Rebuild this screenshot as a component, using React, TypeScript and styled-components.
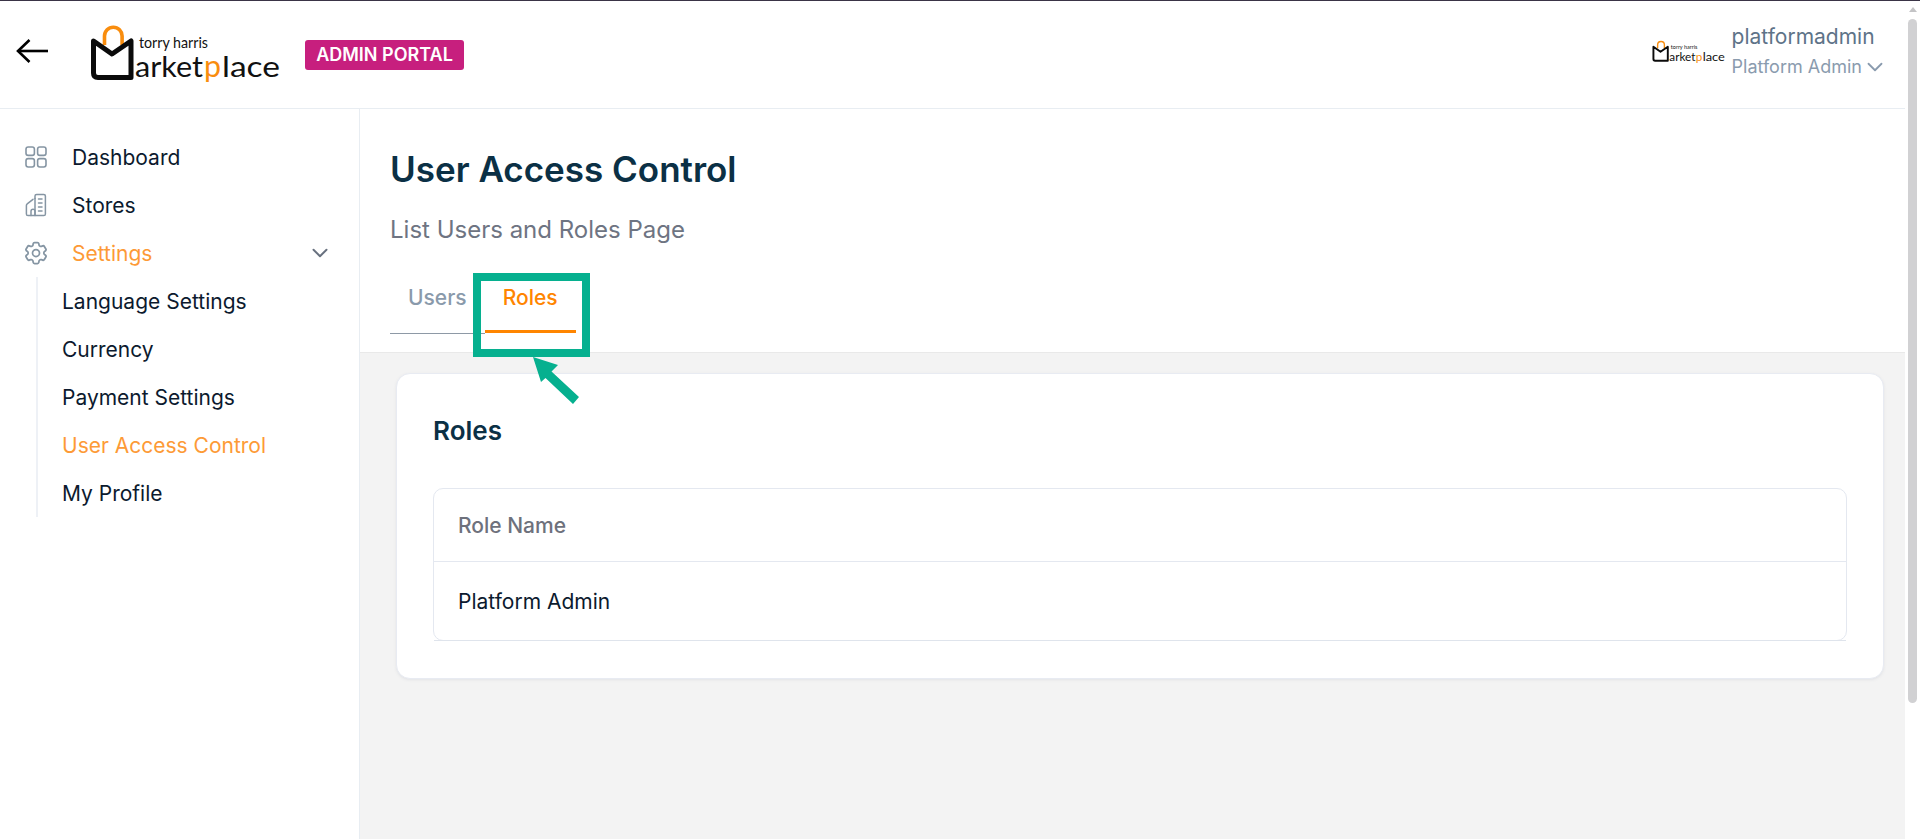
import React from 'react';
import styled, { createGlobalStyle } from 'styled-components';
import { HiOutlineCog6Tooth } from 'react-icons/hi2';
import { ChevronDown } from 'lucide-react';

const Global = createGlobalStyle`
  html, body { margin: 0; padding: 0; height: 100%; overflow: hidden; background: #fff; }
  * { box-sizing: border-box; }
  body { font-family: Inter, "Liberation Sans", sans-serif; }
`;

const Page = styled.div`
  position: relative;
  width: 1920px;
  height: 839px;
  display: flex;
  overflow: hidden;
  border-top: 1px solid #3a3446;
`;

const Content = styled.div`
  width: 1905px;
  display: flex;
  flex-direction: column;
`;

const ScrollRail = styled.div`
  width: 15px;
  padding: 6px 3px 0;
  display: flex;
  flex-direction: column;
  align-items: center;
  background: #fff;
`;

const ScrollUp = styled.div`
  width: 0;
  height: 0;
  border-left: 4px solid transparent;
  border-right: 4px solid transparent;
  border-bottom: 5px solid #c4c4c6;
  margin-bottom: 7px;
`;

const ScrollThumb = styled.div`
  width: 9px;
  height: 684px;
  border-radius: 5px;
  background: #d1d1d3;
`;

const Header = styled.header`
  height: 108px;
  flex: none;
  display: flex;
  align-items: center;
  border-bottom: 1px solid #e8edf2;
  background: #fff;
  padding-left: 16px;
`;

const BackButton = styled.div`
  width: 32px;
  height: 24px;
  flex: none;
  margin-top: -8px;
`;

const BrandLogo = styled.div`
  margin-left: 42px;
  width: 190px;
  height: 60px;
  flex: none;
  margin-top: 2px;
`;

const Badge = styled.div`
  margin-left: 25px;
  margin-top: 0;
  height: 30px;
  width: 159px;
  display: flex;
  align-items: center;
  justify-content: center;
  border-radius: 3px;
  background: #c71f7e;
  color: #fff;
  font-size: 18px;
  font-weight: 600;
  white-space: nowrap;
`;

const UserArea = styled.div`
  margin-left: auto;
  display: flex;
  align-items: center;
  padding-right: 17px;
  margin-top: -7px;
`;

const UserLogo = styled.div`
  width: 73px;
  height: 23px;
  margin-right: 7px;
  margin-top: 2px;
`;

const UserInfo = styled.div`
  display: flex;
  flex-direction: column;
  gap: 7px;
`;

const UserName = styled.div`
  font-size: 21px;
  line-height: 24px;
  color: #5e7388;
`;

const UserRole = styled.div`
  display: flex;
  align-items: center;
  height: 22px;
  font-size: 18px;
  line-height: 22px;
  color: #8a9bae;
`;

const Body = styled.div`
  flex: 1;
  min-height: 0;
  display: flex;
`;

const Sidebar = styled.nav`
  width: 360px;
  flex: none;
  border-right: 1px solid #e8edf2;
  background: #fff;
  padding: 24px 0 0 24px;
`;

const NavRow = styled.div<{ $active?: boolean }>`
  height: 48px;
  display: flex;
  align-items: center;
  gap: 24px;
  padding-right: 26px;
  font-size: 21px;
  color: ${p => (p.$active ? '#fd9a36' : '#0c1a2e')};
`;

const NavIcon = styled.span`
  width: 24px;
  height: 24px;
  flex: none;
  display: flex;
  align-items: center;
  justify-content: center;
  color: #8595a3;
`;

const NavChevron = styled.span`
  margin-left: auto;
  display: flex;
  color: #68717f;
`;

const SubNav = styled.div`
  margin-left: 12px;
  border-left: 2px solid #eef1f6;
  padding-left: 24px;
`;

const SubRow = styled.div<{ $active?: boolean }>`
  height: 48px;
  display: flex;
  align-items: center;
  font-size: 21px;
  color: ${p => (p.$active ? '#fd9a36' : '#0c1a2e')};
`;

const Main = styled.main`
  flex: 1;
  min-width: 0;
  display: flex;
  flex-direction: column;
  background: #f3f3f3;
`;

const TopPanel = styled.section`
  height: 244px;
  flex: none;
  background: #fff;
  border-bottom: 1px solid #e9e9e9;
  padding: 38px 30px 0;
`;

const Title = styled.h1`
  margin: 0;
  font-size: 35px;
  line-height: 44px;
  font-weight: 600;
  color: #0b3045;
`;

const Subtitle = styled.p`
  margin: 25px 0 0;
  font-size: 24px;
  line-height: 28px;
  color: #6e7482;
`;

const Tabs = styled.div`
  margin-top: 28px;
  display: flex;
  height: 62px;
`;

const Tab = styled.div<{ $active?: boolean }>`
  padding: 14px 18px 0;
  font-size: 21px;
  line-height: 24px;
  font-weight: 500;
  color: ${p => (p.$active ? '#ff8500' : '#8a9aab')};
  border-bottom: ${p => (p.$active ? '3px solid #ff8500' : '1px solid #8e99a6')};
  height: ${p => (p.$active ? '61px' : '62px')};
`;

const Card = styled.section`
  margin: 20px 21px 0 36px;
  height: 306px;
  background: #fff;
  border: 1px solid #e8ebf2;
  border-radius: 14px;
  box-shadow: 0 1px 3px rgba(90, 100, 130, 0.1);
  padding: 37px 36px 0;
`;

const CardTitle = styled.h2`
  margin: 0;
  font-size: 26px;
  line-height: 40px;
  font-weight: 600;
  color: #0b3045;
`;

const Table = styled.div`
  margin-top: 37px;
  height: 153px;
  border: 1px solid #e4e8f0;
  border-radius: 10px;
`;

const HeadCell = styled.div`
  height: 73px;
  display: flex;
  align-items: center;
  padding-left: 24px;
  font-size: 21px;
  font-weight: 500;
  color: #6e717c;
  border-bottom: 1px solid #e4e8f0;
`;

const BodyCell = styled.div`
  height: 78px;
  display: flex;
  align-items: center;
  padding-left: 24px;
  font-size: 21px;
  color: #0c1a2e;
`;

const TableRule = styled.div`
  height: 1px;
  background: #dfe4ec;
`;

const Callout = styled.div`
  position: absolute;
  left: 473px;
  top: 272px;
  width: 117px;
  height: 84px;
  border: 8px solid #06b08f;
  pointer-events: none;
`;

const CalloutArrow = styled.svg`
  position: absolute;
  left: 528px;
  top: 350px;
  width: 60px;
  height: 60px;
  pointer-events: none;
`;

const LogoMark: React.FC = () => (
  <svg width="100%" height="100%" viewBox="0 0 190 60" style={{ display: 'block', overflow: 'visible' }}>
    <path d="M14.5 19V10a8.8 8.8 0 0 1 17.6 0V19" fill="none" stroke="#f98d0e" strokeWidth="3.6" />
    <path
      d="M3.5 15 L22 28 L41 15 V51.5 H8 Q3.5 51.5 3.5 47 Z"
      fill="none"
      stroke="#0b0b0b"
      strokeWidth="5"
      strokeLinejoin="round"
    />
    <text x="49" y="22" fontFamily="Lato, sans-serif" fontSize="15" fill="#111" textLength="69" lengthAdjust="spacingAndGlyphs">
      torry harris
    </text>
    <text x="45" y="51" fontFamily="Lato, sans-serif" fontWeight="400" fontSize="29" fill="#111" textLength="68" lengthAdjust="spacingAndGlyphs">
      arket
    </text>
    <text x="114" y="51" fontFamily="Lato, sans-serif" fontWeight="400" fontSize="31" fill="#f98d0e" textLength="17" lengthAdjust="spacingAndGlyphs">
      p
    </text>
    <text x="132" y="51" fontFamily="Lato, sans-serif" fontWeight="400" fontSize="29" fill="#111" textLength="58" lengthAdjust="spacingAndGlyphs">
      lace
    </text>
  </svg>
);

const GridIcon: React.FC = () => (
  <svg width="22" height="22" viewBox="0 0 22 22" fill="none" stroke="currentColor" strokeWidth="1.6">
    <rect x="1" y="1" width="8.4" height="8.4" rx="2.2" />
    <rect x="12.6" y="1" width="8.4" height="8.4" rx="2.2" />
    <rect x="1" y="12.6" width="8.4" height="8.4" rx="2.2" />
    <rect x="12.6" y="12.6" width="8.4" height="8.4" rx="2.2" />
  </svg>
);

const StoreIcon: React.FC = () => (
  <svg width="22" height="24" viewBox="0 0 22 24" fill="none" stroke="currentColor" strokeWidth="1.5" strokeLinejoin="round" strokeLinecap="round">
    <path d="M10 5.5V3a1.6 1.6 0 0 1 1.6-1.6h7.2A1.6 1.6 0 0 1 20.4 3v18a1.6 1.6 0 0 1-1.6 1.6H3A1.6 1.6 0 0 1 1.4 21V12.5a2 2 0 0 1 .8-1.6L8 6.3" />
    <path d="M6 22.5v-4.2a2 2 0 0 1 4 0v4.2" />
    <path d="M13.5 6h3.5M13.5 10h3.5M13.5 14h3.5M13.5 18h3.5" />
    <path d="M10 5.5V22" />
  </svg>
);

const BackArrow: React.FC = () => (
  <svg width="32" height="24" viewBox="0 0 32 24" fill="none" stroke="#000" strokeWidth="2.6">
    <path d="M32 12H2" />
    <path d="M13.5 1L2 12l11.5 11" />
  </svg>
);

export default function App() {
  return (
    <>
      <Global />
      <Page>
        <Content>
          <Header>
            <BackButton>
              <BackArrow />
            </BackButton>
            <BrandLogo>
              <LogoMark />
            </BrandLogo>
            <Badge>ADMIN PORTAL</Badge>
            <UserArea>
              <UserLogo>
                <LogoMark />
              </UserLogo>
              <UserInfo>
                <UserName>platformadmin</UserName>
                <UserRole>
                  Platform Admin
                  <ChevronDown size={26} strokeWidth={1.7} color="#8a9bae" />
                </UserRole>
              </UserInfo>
            </UserArea>
          </Header>
          <Body>
            <Sidebar>
              <NavRow>
                <NavIcon>
                  <GridIcon />
                </NavIcon>
                Dashboard
              </NavRow>
              <NavRow>
                <NavIcon>
                  <StoreIcon />
                </NavIcon>
                Stores
              </NavRow>
              <NavRow $active>
                <NavIcon>
                  <HiOutlineCog6Tooth size={28} style={{ flex: 'none' }} />
                </NavIcon>
                Settings
                <NavChevron>
                  <ChevronDown size={26} strokeWidth={1.8} />
                </NavChevron>
              </NavRow>
              <SubNav>
                <SubRow>Language Settings</SubRow>
                <SubRow>Currency</SubRow>
                <SubRow>Payment Settings</SubRow>
                <SubRow $active>User Access Control</SubRow>
                <SubRow>My Profile</SubRow>
              </SubNav>
            </Sidebar>
            <Main>
              <TopPanel>
                <Title>User Access Control</Title>
                <Subtitle>List Users and Roles Page</Subtitle>
                <Tabs>
                  <Tab>Users</Tab>
                  <Tab $active>Roles</Tab>
                </Tabs>
              </TopPanel>
              <Card>
                <CardTitle>Roles</CardTitle>
                <Table>
                  <HeadCell>Role Name</HeadCell>
                  <BodyCell>Platform Admin</BodyCell>
                  <TableRule />
                </Table>
              </Card>
            </Main>
          </Body>
        </Content>
        <ScrollRail>
          <ScrollUp />
          <ScrollThumb />
        </ScrollRail>
        <Callout />
        <CalloutArrow viewBox="0 0 60 60">
          <path d="M5 6 L30 14 L23.5 20.5 L51 46 L45 53 L17.5 27 L13 31 Z" fill="#06b08f" />
        </CalloutArrow>
      </Page>
    </>
  );
}
